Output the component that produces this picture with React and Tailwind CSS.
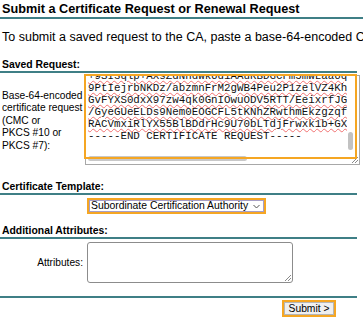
import React from 'react'

const certLines = [
  '+9SI3qlp+AXsZdNhdWk6d1AAuRBDGCFm5mwLaa6q5Yv',
  '9PtIejrbNKDz/abzmnFrM2gWB4Peu2P1zelVZ4KhaQ',
  'GvFYXS0dxX97zw4qk0GnIOwuODV5RTT/EeixrfJGZw',
  '/GyeGUeELDs9Nem0EOGCFL5tKNhZRwthmEkzgzqf1L',
  'RACVmxiRlYX55BlBDdrHc9U70bLTdjFrwxk1b+GXDc',
]

function Rule({ full }) {
  return <div className={full ? 'h-[2px] w-full bg-[#3f7f86]' : 'h-[2px] w-[357px] bg-[#3f7f86]'} />
}

function Grip() {
  return (
    <svg className="absolute right-[1px] bottom-[1px]" width="7" height="7" viewBox="0 0 7 7">
      <path d="M1 7 L7 1 M4 7 L7 4" stroke="#8a8a8a" strokeWidth="1" />
    </svg>
  )
}

function SectionHead({ children, className }) {
  return <div className={'pl-[2px] h-[12px] text-[10.4px] leading-[12px] font-bold ' + className}>{children}</div>
}

export default function App() {
  return (
    <div className="w-[363px] h-[323px] overflow-hidden bg-white text-black font-['Liberation_Sans',Arial,sans-serif]">
      <div className="mt-[2px] h-[15px] pl-[2px] text-[12.7px] leading-[15px] font-bold whitespace-nowrap">
        Submit a Certificate Request or Renewal Request
      </div>
      <Rule full />
      <p className="mt-[11px] h-[15px] pl-[2px] text-[12.5px] leading-[15px] whitespace-nowrap">
        To submit a saved request to the CA, paste a base-64-encoded CMC or PKCS #10 certificate request
      </p>

      <SectionHead className="mt-[14px]">Saved Request:</SectionHead>
      <Rule />
      <div className="mt-[2px] flex items-center">
        <div className="w-[85px] pl-[2px] pt-[2px] text-[10.2px] leading-[12.5px]">
          Base-64-encoded<br />certificate request<br />(CMC or<br />PKCS #10 or<br />PKCS #7):
        </div>
        <div className="relative w-[275px] h-[90px] border border-[#a8a8a8] bg-white">
          <div className="w-[261px] h-[77px] overflow-hidden pl-[2px]">
            <div className="-mt-[7px] pt-[1px] font-['Liberation_Mono',monospace] text-[10.8px] leading-[12px] whitespace-nowrap text-[#111]">
              {certLines.map((l) => (
                <div key={l}>
                  <span className="underline decoration-wavy decoration-[#f07070] decoration-1 underline-offset-[1px]">{l}</span>
                </div>
              ))}
              <div>-----END CERTIFICATE REQUEST-----</div>
            </div>
          </div>
          <span className="absolute left-[262px] top-[56px] w-[5px] h-[18px] rounded-full bg-[#c2c2c2]" />
          <span className="absolute left-[2px] top-[80px] w-[159px] h-[5px] rounded-full bg-[#c8c8c8]" />
          <Grip />
          <span className="absolute -left-[2px] -top-[2px] w-[273px] h-[85px] border-2 border-[#f5a623]" />
        </div>
      </div>

      <SectionHead className="mt-[16px]">Certificate Template:</SectionHead>
      <Rule />
      <div className="mt-[3px] pl-[87px]">
        <div className="w-[179px] h-[16px] border-2 border-[#f5a623]">
          <div className="h-full border border-[#a69ec6] flex items-center justify-between pl-[1px] pr-[3px] text-[10.4px] leading-[10px]">
            <span>Subordinate Certification Authority</span>
            <svg width="7" height="5" viewBox="0 0 7 5">
              <path d="M0.5 1 L3.5 4 L6.5 1" fill="none" stroke="#555" strokeWidth="1" />
            </svg>
          </div>
        </div>
      </div>

      <SectionHead className="mt-[11px]">Additional Attributes:</SectionHead>
      <Rule />
      <div className="mt-[3px] flex items-center">
        <div className="w-[86px] pr-[3px] text-right text-[10.2px] leading-[12px]">Attributes:</div>
        <div className="relative ml-[1px] w-[206px] h-[41px] border border-[#8c8c8c] rounded-[3px] bg-white">
          <Grip />
        </div>
      </div>

      <div className="mt-[13px]">
        <Rule />
      </div>
      <div className="mt-[2px] pl-[282px]">
        <div className="w-[54px] h-[17px] border-2 border-[#f5a623]">
          <div className="h-full border border-[#b5b5b5] bg-[#efefef] flex items-center justify-center text-[10.3px] leading-[10px]">
            Submit &gt;
          </div>
        </div>
      </div>
    </div>
  )
}
